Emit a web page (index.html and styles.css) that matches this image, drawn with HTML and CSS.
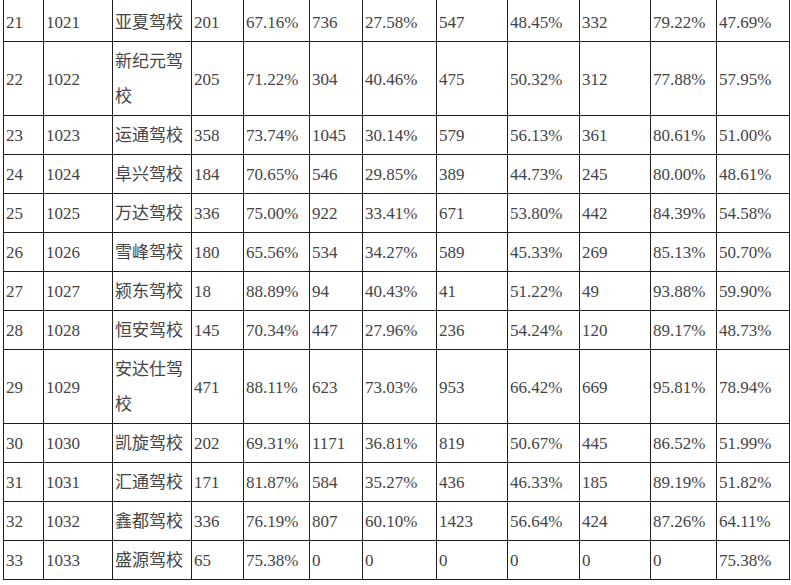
FILE: index.html
```html
<!DOCTYPE html>
<html lang="zh-CN">
<head>
<meta charset="utf-8">
<title>驾校统计</title>
<link rel="stylesheet" href="styles.css">
</head>
<body>
<table class="stats">
<colgroup>
<col class="c1"><col class="c2"><col class="c3"><col class="c4"><col class="c5"><col class="c6"><col class="c7"><col class="c8"><col class="c9"><col class="c10"><col class="c11"><col class="c12">
</colgroup>
<tbody>
<tr class="first"><td>21</td><td>1021</td><td>亚夏驾校</td><td>201</td><td>67.16%</td><td>736</td><td>27.58%</td><td>547</td><td>48.45%</td><td>332</td><td>79.22%</td><td>47.69%</td></tr>
<tr><td>22</td><td>1022</td><td>新纪元驾校</td><td>205</td><td>71.22%</td><td>304</td><td>40.46%</td><td>475</td><td>50.32%</td><td>312</td><td>77.88%</td><td>57.95%</td></tr>
<tr><td>23</td><td>1023</td><td>运通驾校</td><td>358</td><td>73.74%</td><td>1045</td><td>30.14%</td><td>579</td><td>56.13%</td><td>361</td><td>80.61%</td><td>51.00%</td></tr>
<tr><td>24</td><td>1024</td><td>阜兴驾校</td><td>184</td><td>70.65%</td><td>546</td><td>29.85%</td><td>389</td><td>44.73%</td><td>245</td><td>80.00%</td><td>48.61%</td></tr>
<tr><td>25</td><td>1025</td><td>万达驾校</td><td>336</td><td>75.00%</td><td>922</td><td>33.41%</td><td>671</td><td>53.80%</td><td>442</td><td>84.39%</td><td>54.58%</td></tr>
<tr><td>26</td><td>1026</td><td>雪峰驾校</td><td>180</td><td>65.56%</td><td>534</td><td>34.27%</td><td>589</td><td>45.33%</td><td>269</td><td>85.13%</td><td>50.70%</td></tr>
<tr><td>27</td><td>1027</td><td>颍东驾校</td><td>18</td><td>88.89%</td><td>94</td><td>40.43%</td><td>41</td><td>51.22%</td><td>49</td><td>93.88%</td><td>59.90%</td></tr>
<tr><td>28</td><td>1028</td><td>恒安驾校</td><td>145</td><td>70.34%</td><td>447</td><td>27.96%</td><td>236</td><td>54.24%</td><td>120</td><td>89.17%</td><td>48.73%</td></tr>
<tr><td>29</td><td>1029</td><td>安达仕驾校</td><td>471</td><td>88.11%</td><td>623</td><td>73.03%</td><td>953</td><td>66.42%</td><td>669</td><td>95.81%</td><td>78.94%</td></tr>
<tr><td>30</td><td>1030</td><td>凯旋驾校</td><td>202</td><td>69.31%</td><td>1171</td><td>36.81%</td><td>819</td><td>50.67%</td><td>445</td><td>86.52%</td><td>51.99%</td></tr>
<tr><td>31</td><td>1031</td><td>汇通驾校</td><td>171</td><td>81.87%</td><td>584</td><td>35.27%</td><td>436</td><td>46.33%</td><td>185</td><td>89.19%</td><td>51.82%</td></tr>
<tr><td>32</td><td>1032</td><td>鑫都驾校</td><td>336</td><td>76.19%</td><td>807</td><td>60.10%</td><td>1423</td><td>56.64%</td><td>424</td><td>87.26%</td><td>64.11%</td></tr>
<tr><td>33</td><td>1033</td><td>盛源驾校</td><td>65</td><td>75.38%</td><td>0</td><td>0</td><td>0</td><td>0</td><td>0</td><td>0</td><td>75.38%</td></tr>
</tbody>
</table>
</body>
</html>
```
FILE: styles.css
```css
html, body {
  margin: 0;
  padding: 0;
  background: #ffffff;
}
body {
  overflow: hidden;
}
.stats {
  margin: -2px 0 0 3px;
  border-collapse: collapse;
  table-layout: fixed;
  width: 787px;
  font-family: "Liberation Serif", "Noto Sans CJK SC", serif;
  font-size: 17px;
  color: #444444;
}
.stats td {
  border: 1px solid #1e1e1e;
  padding: 2px 1px 1px 2px;
  line-height: 35px;
  vertical-align: middle;
  text-align: left;
  overflow: hidden;
}
.stats tr.first td {
  padding-top: 6px;
}
.c1 { width: 40px; }
.c2 { width: 69px; }
.c3 { width: 79px; }
.c4 { width: 52px; }
.c5 { width: 66px; }
.c6 { width: 53px; }
.c7 { width: 74px; }
.c8 { width: 71px; }
.c9 { width: 72px; }
.c10 { width: 71px; }
.c11 { width: 66px; }
.c12 { width: 73px; }
```
